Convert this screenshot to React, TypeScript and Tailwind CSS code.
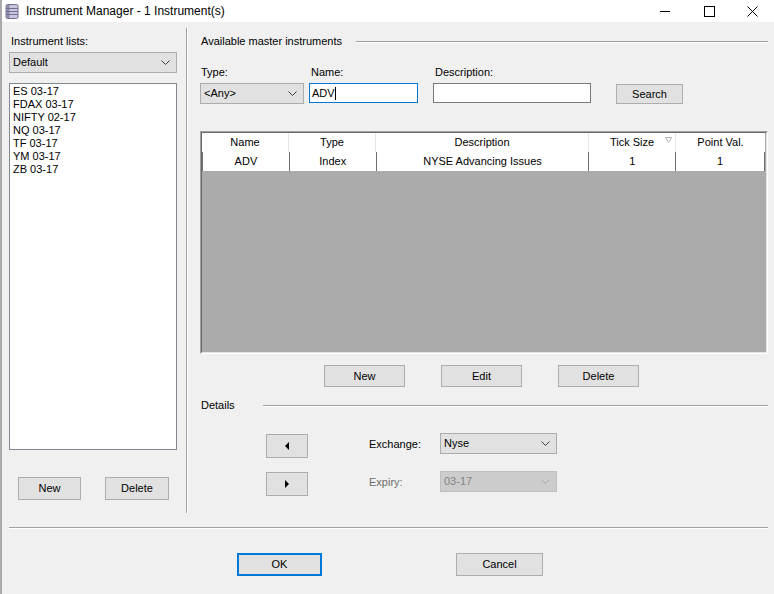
import React from "react";

// Instrument Manager dialog (WinForms look)

const Chevron = ({ color = "#3c3c3c" }: { color?: string }) => (
  <svg width="9" height="5" viewBox="0 0 9 5">
    <polyline points="0.5,0.5 4.5,4.5 8.5,0.5" fill="none" stroke={color} strokeWidth="1" />
  </svg>
);

const Btn = ({
  label,
  className = "",
  children,
}: {
  label?: string;
  className?: string;
  children?: React.ReactNode;
}) => (
  <button
    className={`flex items-center justify-center border border-[#adadad] bg-[#e1e1e1] text-[11px] text-black ${className}`}
  >
    {label}
    {children}
  </button>
);

const Select = ({
  value,
  className = "",
  disabled = false,
}: {
  value: string;
  className?: string;
  disabled?: boolean;
}) => (
  <div
    className={`flex items-center justify-between pl-[3px] pr-[6px] border ${
      disabled
        ? "bg-[#cccccc] border-[#bfbfbf] text-[#838383]"
        : "bg-[#e1e1e1] border-[#acacac] text-black"
    } ${className}`}
  >
    <span>{value}</span>
    <Chevron color={disabled ? "#a6a6a6" : "#3c3c3c"} />
  </div>
);

const Groove = ({ className = "" }: { className?: string }) => (
  <div className={`h-[2px] border-t border-[#a0a0a0] bg-white ${className}`} />
);

const lists = ["ES 03-17", "FDAX 03-17", "NIFTY 02-17", "NQ 03-17", "TF 03-17", "YM 03-17", "ZB 03-17"];

const columns = [
  { name: "Name", w: "w-[87px]", value: "ADV" },
  { name: "Type", w: "w-[87px]", value: "Index" },
  { name: "Description", w: "w-[213px]", value: "NYSE Advancing Issues" },
  { name: "Tick Size", w: "w-[87px]", value: "1", sort: true },
  { name: "Point Val.", w: "w-[89px]", value: "1" },
];

export default function App() {
  return (
    <div className="w-[774px] h-[594px] overflow-hidden bg-[#f0f0f0] border-l-2 border-[#aaaaaa] flex flex-col font-['Liberation_Sans',Arial,sans-serif] text-[11px] leading-[13px] text-black">
      {/* Title bar */}
      <div className="h-[22px] bg-white flex items-center shrink-0">
        <svg width="14" height="15" viewBox="0 0 14 15" className="ml-[3px]">
          <rect x="1" y="0.5" width="12" height="14" rx="1.5" fill="#c9c6e0" stroke="#6f6f8f" />
          <rect x="1.5" y="1" width="3" height="13" fill="#8e8aa9" />
          <line x1="1" y1="4.5" x2="13" y2="4.5" stroke="#6f6f8f" />
          <line x1="1" y1="7.5" x2="13" y2="7.5" stroke="#6f6f8f" />
          <line x1="1" y1="10.5" x2="13" y2="10.5" stroke="#6f6f8f" />
        </svg>
        <span className="ml-[7px] text-[12px]">Instrument Manager - 1 Instrument(s)</span>
        <div className="ml-auto flex items-center">
          <svg width="11" height="11" viewBox="0 0 11 11" className="mr-[33px]">
            <line x1="0" y1="5.5" x2="10" y2="5.5" stroke="#000" />
          </svg>
          <svg width="11" height="11" viewBox="0 0 11 11" className="mr-[32px]">
            <rect x="0.5" y="0.5" width="10" height="10" fill="none" stroke="#000" />
          </svg>
          <svg width="11" height="11" viewBox="0 0 11 11" className="mr-[16px]">
            <path d="M0.5 0.5 L10.5 10.5 M10.5 0.5 L0.5 10.5" stroke="#000" />
          </svg>
        </div>
      </div>

      {/* Main area */}
      <div className="flex h-[491px] shrink-0">
        {/* Left column */}
        <div className="w-[184px] pl-[7px] pt-[13px] flex flex-col">
          <div className="h-[13px] ml-[2px]">Instrument lists:</div>
          <Select value="Default" className="mt-[4px] w-[168px] h-[21px]" />
          <div className="mt-[10px] w-[168px] h-[367px] bg-white border border-[#828790] pl-[3px] pt-[1px]">
            {lists.map((l) => (
              <div key={l} className="h-[13px]">
                {l}
              </div>
            ))}
          </div>
          <div className="mt-[27px] flex ml-[9px]">
            <Btn label="New" className="w-[63px] h-[23px]" />
            <Btn label="Delete" className="ml-[24px] w-[64px] h-[23px]" />
          </div>
        </div>

        {/* Vertical separator */}
        <div className="mt-[6px] w-[2px] border-l border-[#a0a0a0] bg-white" />

        {/* Right column */}
        <div className="flex-1 pl-[12px] pr-[6px] pt-[13px] flex flex-col">
          <div className="flex items-center h-[13px]">
            <span className="ml-[1px]">Available master instruments</span>
            <Groove className="ml-[14px] flex-1" />
          </div>

          <div className="mt-[18px] flex h-[13px]">
            <span className="ml-[1px] w-[110px]">Type:</span>
            <span className="w-[124px]">Name:</span>
            <span>Description:</span>
          </div>

          <div className="mt-[4px] flex items-start">
            <Select value="<Any>" className="w-[104px] h-[21px]" />
            <div className="ml-[5px] w-[109px] h-[20px] bg-white border border-[#0078d7] flex items-center pl-[2px]">
              ADV<span className="w-px h-[13px] bg-black" />
            </div>
            <div className="ml-[15px] w-[158px] h-[20px] bg-white border border-[#7a7a7a]" />
            <Btn label="Search" className="ml-[25px] mt-[1px] w-[67px] h-[20px]" />
          </div>

          {/* Grid */}
          <div className="mt-[27px] w-[568px] h-[223px] border-t border-l border-[#a0a0a0] border-r border-b border-r-white border-b-white">
            <div className="w-full h-full bg-[#ababab] border-t border-l border-[#696969] border-r border-b border-r-[#e3e3e3] border-b-[#e3e3e3]">
              <div className="flex h-[19px] bg-white w-[563px]">
                {columns.map((c, i) => (
                  <div
                    key={c.name}
                    className={`relative flex items-center justify-center ${c.w} ${
                      i < columns.length - 1 ? "border-r border-[#e5e5e5]" : ""
                    }`}
                  >
                    {c.name}
                    {c.sort && (
                      <svg width="7" height="6" viewBox="0 0 7 6" className="absolute right-[3px] top-[4px]">
                        <polygon points="0.5,0.5 6.5,0.5 3.5,5.5" fill="none" stroke="#b0b0b0" />
                      </svg>
                    )}
                  </div>
                ))}
              </div>
              <div className="flex h-[19px] bg-white w-[563px] border-l border-[#6e6e6e]">
                {columns.map((c) => (
                  <div
                    key={c.name}
                    className={`flex items-center justify-center border-r border-[#6e6e6e] ${c.w}`}
                  >
                    {c.value}
                  </div>
                ))}
              </div>
            </div>
          </div>

          <div className="mt-[11px] flex">
            <Btn label="New" className="ml-[124px] w-[81px] h-[22px]" />
            <Btn label="Edit" className="ml-[36px] w-[81px] h-[22px]" />
            <Btn label="Delete" className="ml-[36px] w-[81px] h-[22px]" />
          </div>

          <div className="mt-[12px] flex items-center h-[13px]">
            <span className="ml-[1px]">Details</span>
            <Groove className="ml-[28px] flex-1" />
          </div>

          <div className="mt-[21px] flex items-start h-[25px]">
            <Btn className="ml-[66px] mt-[1px] w-[42px] h-[24px]">
              <svg width="4" height="8" viewBox="0 0 4 8">
                <polygon points="4,0 4,8 0,4" fill="#000" />
              </svg>
            </Btn>
            <span className="ml-[61px] mt-[5px] w-[71px]">Exchange:</span>
            <Select value="Nyse" className="w-[117px] h-[21px]" />
          </div>

          <div className="mt-[13px] flex items-start h-[25px]">
            <Btn className="ml-[66px] mt-[1px] w-[42px] h-[24px]">
              <svg width="4" height="8" viewBox="0 0 4 8">
                <polygon points="0,0 0,8 4,4" fill="#000" />
              </svg>
            </Btn>
            <span className="ml-[61px] mt-[5px] w-[71px] text-[#6d6d6d]">Expiry:</span>
            <Select value="03-17" className="w-[117px] h-[21px]" disabled />
          </div>
        </div>
      </div>

      {/* Bottom separator */}
      <Groove className="mt-[14px] ml-[7px] w-[759px]" />

      <div className="mt-[24px] flex">
        <button className="ml-[235px] w-[85px] h-[23px] border-2 border-[#0078d7] bg-[#e1e1e1] text-[11px]">
          OK
        </button>
        <Btn label="Cancel" className="ml-[134px] w-[87px] h-[23px]" />
      </div>
    </div>
  );
}
